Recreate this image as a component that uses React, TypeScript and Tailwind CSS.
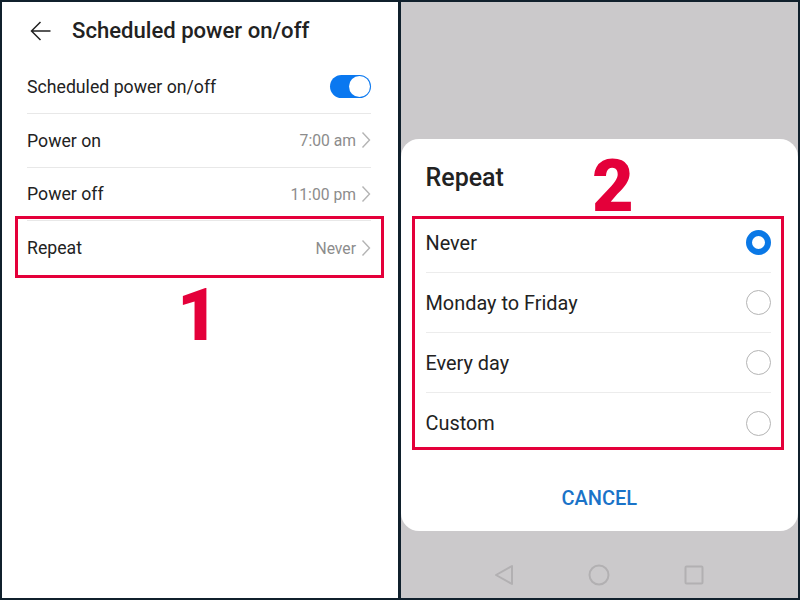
import React from "react";

function Chevron() {
  return (
    <svg width="10" height="18" viewBox="0 0 10 18" fill="none" className="ml-[5px]">
      <path d="M1.5 1.5L8.5 9L1.5 16.5" stroke="#b4b4b4" strokeWidth="1.4" />
    </svg>
  );
}

function SettingRow({ label, value, last }: { label: string; value: string; last?: boolean }) {
  return (
    <div className={`h-[53.5px] flex items-center justify-between ${last ? "" : "border-b border-[#e8e8e8]"}`}>
      <span className="text-[17.7px] text-[#222] pt-[2px]">{label}</span>
      <span className="flex items-center text-[15.7px] text-[#8c8c8c]">
        <span className="pt-[2px]">{value}</span>
        <Chevron />
      </span>
    </div>
  );
}

function OptionRow({ label, selected, last }: { label: string; selected?: boolean; last?: boolean }) {
  return (
    <div className={`h-[60px] flex items-center justify-between ${last ? "" : "border-b border-[#ececec]"}`}>
      <span className="text-[19.9px] text-[#222] pt-[2px]">{label}</span>
      {selected ? (
        <span className="w-[25px] h-[25px] rounded-full border-[6px] border-[#0a78e6] bg-white" />
      ) : (
        <span className="w-[25px] h-[25px] rounded-full border border-[#b4b4b4] bg-white" />
      )}
    </div>
  );
}

export default function App() {
  return (
    <div
      className="w-[800px] h-[600px] flex gap-[3px] bg-[#10202c] p-[2px] overflow-hidden"
      style={{ fontFamily: "Roboto, 'Liberation Sans', sans-serif" }}
    >
      <div className="relative w-[396px] h-full bg-white">
        <div className="h-[58px] flex items-center pl-[28px]">
          <svg width="21" height="20" viewBox="0 0 21 20" fill="none">
            <path d="M20.5 10H1.5M10.5 1L1.5 10L10.5 19" stroke="#222" strokeWidth="1.5" />
          </svg>
          <span className="ml-[21px] text-[22.1px] font-medium text-[#222] pb-[1px]">Scheduled power on/off</span>
        </div>
        <div className="pl-[25px] pr-[27px]">
          <div className="h-[54px] flex items-center justify-between border-b border-[#e8e8e8]">
            <span className="text-[17.7px] text-[#222] pt-[2px]">Scheduled power on/off</span>
            <span className="w-[41px] h-[23px] rounded-full bg-[#0a78f0] flex items-center justify-end pr-[1px]">
              <span className="w-[21px] h-[21px] rounded-full bg-white" />
            </span>
          </div>
          <SettingRow label="Power on" value="7:00 am" />
          <SettingRow label="Power off" value="11:00 pm" />
          <SettingRow label="Repeat" value="Never" last />
        </div>
        <div className="absolute left-[13px] top-[214px] w-[369px] h-[62px] border-[3px] border-[#e4003a]" />
        <span className="absolute left-[175px] top-[272px] text-[72px] leading-[84px] text-[#e4003a] font-black">1</span>
      </div>
      <div className="relative flex-1 h-full bg-[#cbc9cb] flex flex-col">
        <div className="mt-[137px] h-[392px] bg-white rounded-[18px] pl-[24.5px] pr-[27px] flex flex-col">
          <div className="h-[74px] flex items-center text-[25px] font-medium text-[#222] pt-[3px]">Repeat</div>
          <div>
            <OptionRow label="Never" selected />
            <OptionRow label="Monday to Friday" />
            <OptionRow label="Every day" />
            <OptionRow label="Custom" last />
          </div>
          <div className="mt-[30px] text-center text-[20px] font-medium text-[#1a73c8] pl-[2px]">CANCEL</div>
        </div>
        <div className="flex-1 flex items-center justify-center gap-[74px] pt-[20px] pr-[1px]">
          <svg width="20" height="22" viewBox="0 0 20 22" fill="none">
            <path d="M18 2V20L2 11Z" stroke="#b2b0b2" strokeWidth="2" strokeLinejoin="round" />
          </svg>
          <svg width="22" height="22" viewBox="0 0 22 22" fill="none">
            <circle cx="11" cy="11" r="9.5" stroke="#b2b0b2" strokeWidth="2" />
          </svg>
          <svg width="20" height="20" viewBox="0 0 20 20" fill="none">
            <rect x="1.5" y="1.5" width="17" height="17" rx="1" stroke="#b2b0b2" strokeWidth="2" />
          </svg>
        </div>
        <div className="absolute left-[11px] top-[214px] w-[372px] h-[234px] border-[3px] border-[#e4003a]" />
        <span className="absolute left-[191px] top-[143px] text-[72px] leading-[84px] text-[#e4003a] font-black">2</span>
      </div>
    </div>
  );
}
